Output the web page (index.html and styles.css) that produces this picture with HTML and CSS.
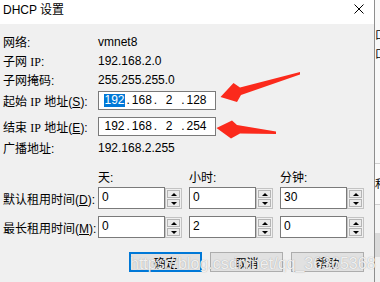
FILE: index.html
```html
<!DOCTYPE html>
<html lang="zh-CN">
<head>
<meta charset="utf-8">
<title>DHCP 设置</title>
<link rel="stylesheet" href="styles.css">
</head>
<body>
<div class="dialog">
  <div class="titlebar">
    <span class="title">DHCP 设置</span>
    <svg class="close" viewBox="0 0 10 10" width="10" height="10"><path d="M0.5 0.5L9.5 9.5M9.5 0.5L0.5 9.5" stroke="#000" stroke-width="1" fill="none"/></svg>
  </div>
  <div class="content">
    <div class="row"><span class="label">网络:</span><span class="value">vmnet8</span></div>
    <div class="row"><span class="label">子网 <span class="ser">IP</span>:</span><span class="value">192.168.2.0</span></div>
    <div class="row"><span class="label">子网掩码:</span><span class="value">255.255.255.0</span></div>
    <div class="row ip-first">
      <span class="label">起始 <span class="ser">IP</span> 地址(<u>S</u>):</span>
      <div class="ipbox"><span class="oct"><span class="sel">192</span></span><span class="dot">.</span><span class="oct">168</span><span class="dot">.</span><span class="oct">2</span><span class="dot">.</span><span class="oct">128</span></div>
    </div>
    <div class="row ip-second">
      <span class="label">结束 <span class="ser">IP</span> 地址(<u>E</u>):</span>
      <div class="ipbox"><span class="oct">192</span><span class="dot">.</span><span class="oct">168</span><span class="dot">.</span><span class="oct">2</span><span class="dot">.</span><span class="oct">254</span></div>
    </div>
    <div class="row bcast"><span class="label">广播地址:</span><span class="value">192.168.2.255</span></div>
    <div class="row heads">
      <span class="label"></span>
      <div class="cols"><span class="col">天:</span><span class="col">小时:</span><span class="col">分钟:</span></div>
    </div>
    <div class="row time time-first">
      <span class="label">默认租用时间(<u>D</u>):</span>
      <div class="cols">
        <div class="spin"><div class="field">0</div><div class="spinner"><span class="sb"><i class="up"></i></span><span class="sb"><i class="down"></i></span></div></div>
        <div class="spin"><div class="field">0</div><div class="spinner"><span class="sb"><i class="up"></i></span><span class="sb"><i class="down"></i></span></div></div>
        <div class="spin"><div class="field">30</div><div class="spinner"><span class="sb"><i class="up"></i></span><span class="sb"><i class="down"></i></span></div></div>
      </div>
    </div>
    <div class="row time time-second">
      <span class="label">最长租用时间(<u>M</u>):</span>
      <div class="cols">
        <div class="spin"><div class="field">0</div><div class="spinner"><span class="sb"><i class="up"></i></span><span class="sb"><i class="down"></i></span></div></div>
        <div class="spin"><div class="field">2</div><div class="spinner"><span class="sb"><i class="up"></i></span><span class="sb"><i class="down"></i></span></div></div>
        <div class="spin"><div class="field">0</div><div class="spinner"><span class="sb"><i class="up"></i></span><span class="sb"><i class="down"></i></span></div></div>
      </div>
    </div>
    <div class="buttons">
      <span class="btn default">确定</span>
      <span class="btn">取消</span>
      <span class="btn">帮助</span>
    </div>
  </div>
</div>
<div class="strip">
  <div class="strip-top"><span class="frag">口.</span><span class="frag">口.</span></div>
  <div class="strip-row"><span class="frag">和</span></div>
  <div class="strip-gap"></div>
  <div class="strip-band"></div>
  <div class="strip-rest"></div>
</div>
<svg class="arrows" width="380" height="282" viewBox="0 0 380 282">
  <polygon points="300,72 240,87.5 233.5,83 220.5,97 237,102 241,95 300,74.5" fill="#fb2a1c"/>
  <polygon points="276,131.5 237,125 232,120.5 216.5,128 231,138.5 240,133.5 276,134" fill="#fb2a1c"/>
</svg>
<div class="watermark">https://blog.csdn.net/qq_36365368</div>
</body>
</html>
```

FILE: styles.css
```css
html, body {
  margin: 0;
  padding: 0;
}
body {
  width: 380px;
  height: 282px;
  overflow: hidden;
  display: flex;
  position: relative;
  background: #f0f0f0;
  font-family: "Liberation Sans", "Noto Sans CJK SC", sans-serif;
  font-size: 12px;
  color: #000;
}
.dialog {
  width: 374px;
  border-right: 1px solid #8e8e8e;
  background: #f0f0f0;
  display: flex;
  flex-direction: column;
  flex: none;
}
.titlebar {
  height: 24px;
  box-sizing: border-box;
  background: #fff;
  display: flex;
  justify-content: space-between;
  align-items: flex-start;
  padding: 2px 10px 0 3px;
}
.title {
  line-height: 16px;
}
.close {
  margin-top: 2px;
  display: block;
}
.content {
  display: flex;
  flex-direction: column;
  padding: 8px 10px 0 3px;
}
.row {
  display: flex;
  align-items: center;
  height: 19px;
}
.label {
  width: 95px;
  flex: none;
  white-space: nowrap;
}
.label u {
  text-decoration: underline;
  text-underline-offset: 1px;
}
.ser {
  font-family: "Liberation Serif", serif;
}
.ip-first {
  margin-top: 2px;
}
.ip-second {
  margin-top: 7px;
}
.ipbox {
  width: 118px;
  height: 19px;
  box-sizing: border-box;
  border: 1px solid #7a7a7a;
  background: #fff;
  display: flex;
  align-items: center;
  padding-left: 3.5px;
}
.oct {
  width: 24px;
  text-align: center;
  flex: none;
  line-height: 13px;
}
.sel {
  background: #0078d7;
  color: #fff;
  display: inline-block;
  line-height: 13px;
}
.dot {
  flex: none;
  line-height: 13px;
}
.bcast {
  margin-top: 2px;
}
.heads {
  margin-top: 10px;
}
.cols {
  display: flex;
  gap: 7px;
}
.col {
  width: 84px;
}
.time {
  height: 22px;
}
.time-first {
  margin-top: 1px;
}
.time-second {
  margin-top: 7px;
}
.spin {
  width: 84px;
  height: 22px;
  display: flex;
}
.field {
  width: 67px;
  height: 22px;
  box-sizing: border-box;
  border: 1px solid #7a7a7a;
  background: #fff;
  padding: 2px 3px;
  line-height: 14px;
}
.spinner {
  width: 17px;
  height: 21px;
  margin-top: 1px;
  box-sizing: border-box;
  border: 1px solid #c3c3c3;
  background: #f0f0f0;
  display: flex;
  flex-direction: column;
  gap: 1px;
  padding: 1px;
}
.sb {
  flex: 1;
  border: 1px solid #b4b4b4;
  background: #ebebeb;
  display: flex;
  align-items: center;
  justify-content: center;
}
.up {
  width: 0;
  height: 0;
  border-left: 3px solid transparent;
  border-right: 3px solid transparent;
  border-bottom: 3px solid #000;
}
.down {
  width: 0;
  height: 0;
  border-left: 3px solid transparent;
  border-right: 3px solid transparent;
  border-top: 3px solid #000;
}
.buttons {
  display: flex;
  justify-content: flex-end;
  gap: 8px;
  margin-top: 14px;
}
.btn {
  width: 73px;
  height: 20px;
  box-sizing: border-box;
  border: 1px solid #adadad;
  background: #e1e1e1;
  display: flex;
  align-items: center;
  justify-content: center;
}
.btn.default {
  border: 2px solid #0078d7;
}
.strip {
  flex: 1;
  display: flex;
  flex-direction: column;
  overflow: hidden;
  background: #f0f0f0;
}
.strip-top {
  height: 163px;
  box-sizing: border-box;
  background: #f9f9f9;
  padding-top: 28px;
  display: flex;
  flex-direction: column;
  gap: 5px;
}
.frag {
  font-size: 11px;
  line-height: 14px;
  white-space: nowrap;
}
.strip-row {
  height: 42px;
  box-sizing: border-box;
  border-top: 1px solid #d0d0d0;
  border-bottom: 1px solid #d0d0d0;
  background: #fbfbfb;
  display: flex;
  align-items: center;
}
.strip-gap {
  height: 28px;
  background: #f5f5f5;
}
.strip-band {
  height: 24px;
  background: #dadada;
}
.strip-rest {
  flex: 1;
  background: #f0f0f0;
}
.arrows {
  position: absolute;
  left: 0;
  top: 0;
  pointer-events: none;
}
.watermark {
  position: absolute;
  left: 130px;
  top: 256px;
  font-family: "Liberation Sans", sans-serif;
  font-size: 16px;
  line-height: 16px;
  white-space: nowrap;
  color: rgba(255, 255, 255, 0.85);
  text-shadow: 0 0 1px rgba(90, 90, 90, 0.55);
  pointer-events: none;
}
```
